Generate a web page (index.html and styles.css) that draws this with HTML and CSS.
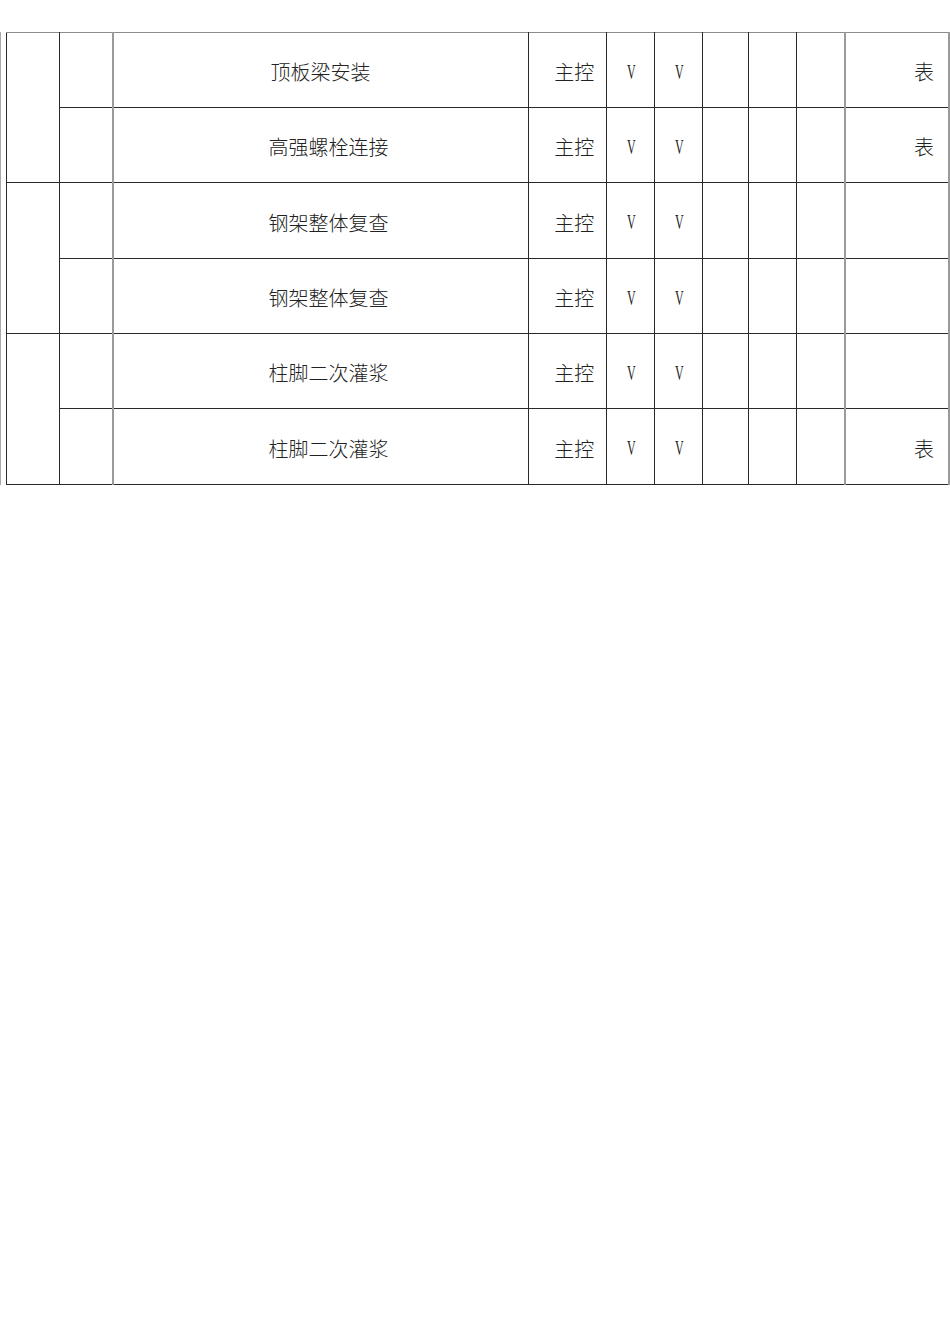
FILE: index.html
```html
<!DOCTYPE html>
<html lang="zh">
<head>
<meta charset="utf-8">
<title>检验批</title>
<link rel="stylesheet" href="styles.css">
</head>
<body>
<div class="sheet">
  <table class="grid">
    <colgroup>
      <col class="c1"><col class="c2"><col class="c3"><col class="c4"><col class="c5">
      <col class="c6"><col class="c7"><col class="c8"><col class="c9"><col class="c10">
    </colgroup>
    <tbody>
      <tr class="r75">
        <td class="grp" rowspan="2"></td>
        <td></td>
        <td class="name five">顶板梁安装</td>
        <td class="ctl">主控</td>
        <td class="chk"><span class="v">V</span></td>
        <td class="chk"><span class="v">V</span></td>
        <td></td><td></td><td></td>
        <td class="tbl">表</td>
      </tr>
      <tr class="r75">
        <td></td>
        <td class="name">高强螺栓连接</td>
        <td class="ctl">主控</td>
        <td class="chk"><span class="v">V</span></td>
        <td class="chk"><span class="v">V</span></td>
        <td></td><td></td><td></td>
        <td class="tbl">表</td>
      </tr>
      <tr class="r76">
        <td class="grp" rowspan="2"></td>
        <td></td>
        <td class="name">钢架整体复查</td>
        <td class="ctl">主控</td>
        <td class="chk"><span class="v">V</span></td>
        <td class="chk"><span class="v">V</span></td>
        <td></td><td></td><td></td>
        <td class="tbl"></td>
      </tr>
      <tr class="r75">
        <td></td>
        <td class="name">钢架整体复查</td>
        <td class="ctl">主控</td>
        <td class="chk"><span class="v">V</span></td>
        <td class="chk"><span class="v">V</span></td>
        <td></td><td></td><td></td>
        <td class="tbl"></td>
      </tr>
      <tr class="r75">
        <td class="grp" rowspan="2"></td>
        <td></td>
        <td class="name">柱脚二次灌浆</td>
        <td class="ctl">主控</td>
        <td class="chk"><span class="v">V</span></td>
        <td class="chk"><span class="v">V</span></td>
        <td></td><td></td><td></td>
        <td class="tbl"></td>
      </tr>
      <tr class="r76">
        <td></td>
        <td class="name">柱脚二次灌浆</td>
        <td class="ctl">主控</td>
        <td class="chk"><span class="v">V</span></td>
        <td class="chk"><span class="v">V</span></td>
        <td></td><td></td><td></td>
        <td class="tbl">表</td>
      </tr>
    </tbody>
  </table>
</div>
</body>
</html>
```

FILE: styles.css
```css
html, body {
  margin: 0;
  padding: 0;
  background: #ffffff;
}

body {
  font-family: "Noto Sans CJK SC", "Noto Sans", sans-serif;
  color: #222222;
  font-size: 20px;
}

.sheet {
  margin-top: 32px;
  padding-left: 5px;
  border-left: 1px solid #a8a8a8;
  width: 945px;
}

.grid {
  border-collapse: collapse;
  table-layout: fixed;
  width: 944px;
}

.c1 { width: 53px; }
.c2 { width: 53px; }
.c3 { width: 416px; }
.c4 { width: 78px; }
.c5 { width: 48px; }
.c6 { width: 48px; }
.c7 { width: 46px; }
.c8 { width: 48px; }
.c9 { width: 48px; }
.c10 { width: 104px; }

.grid td {
  border: 1px solid #2a2a2a;
  padding: 0;
  vertical-align: middle;
  line-height: 24px;
  font-weight: 300;
}

.grid tr:first-child td {
  border-top-color: #8c8c8c;
}

.grid td:last-child {
  border-right: 2px solid #9a9a9a;
}

.r75 { height: 75px; }
.r76 { height: 76px; }

.name {
  text-align: left;
  padding-left: 155px !important;
  padding-top: 4px !important;
  border-left: 2px solid #9a9a9a !important;
}

.name.five {
  padding-left: 157px !important;
}

.ctl {
  text-align: right;
  padding-right: 12px !important;
  padding-top: 4px !important;
}

.chk {
  text-align: center;
  padding-top: 2px !important;
}

.v {
  display: inline-block;
  font-family: "Liberation Serif", serif;
  font-size: 20px;
  font-weight: 400;
  transform: scaleX(0.6);
}

.tbl {
  text-align: right;
  padding-right: 14px !important;
  padding-top: 4px !important;
  border-left: 2px solid #9a9a9a !important;
}
```
